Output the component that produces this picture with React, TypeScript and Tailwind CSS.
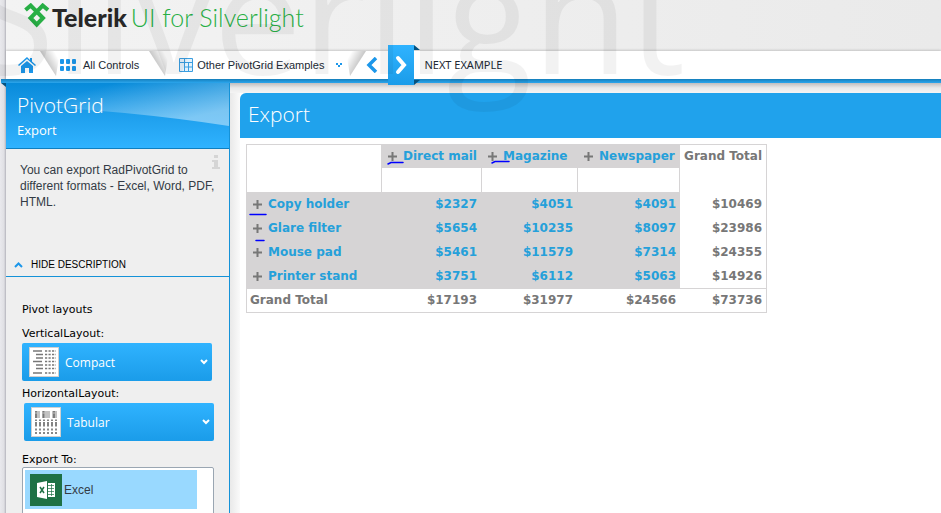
import type { ReactNode } from 'react';

const columns = ['Direct mail', 'Magazine', 'Newspaper'];

const rows = [
  { name: 'Copy holder', values: ['$2327', '$4051', '$4091'], total: '$10469' },
  { name: 'Glare filter', values: ['$5654', '$10235', '$8097'], total: '$23986' },
  { name: 'Mouse pad', values: ['$5461', '$11579', '$7314'], total: '$24355' },
  { name: 'Printer stand', values: ['$3751', '$6112', '$5063'], total: '$14926' },
];

const totals = ['$17193', '$31977', '$24566', '$73736'];

function TelerikLogo() {
  return (
    <svg viewBox="0 0 26 25" className="mt-px h-[25px] w-[26px]" fill="none" stroke="#28af45" strokeWidth="4">
      <path d="M1.5 7 6.700 2.500 19 15l-6.300 6.500L6.500 15 18.700 2.500 24 7" />
    </svg>
  );
}

function TabEdge({ flip = false }: { flip?: boolean }) {
  return (
    <svg viewBox="0 0 20 28" className={flip ? 'h-7 w-5 shrink-0 -scale-x-100' : 'h-7 w-5 shrink-0'}>
      <defs>
        <linearGradient id="edge" gradientUnits="userSpaceOnUse" x1="5" y1="9" x2="16" y2="3">
          <stop offset="0" stopColor="#000" stopOpacity="0.22" />
          <stop offset="1" stopColor="#000" stopOpacity="0" />
        </linearGradient>
      </defs>
      <path d="M0 0h20l-4 25z" fill="url(#edge)" />
    </svg>
  );
}

function Plus() {
  return (
    <button type="button" aria-label="Expand" className="mr-1.5 inline-block align-[-1px]">
      <svg viewBox="0 0 9 9" className="block size-[9px]" stroke="#777" strokeWidth="2">
        <path d="M0 4.5h9M4.5 0v9" />
      </svg>
    </button>
  );
}

function CompactIcon() {
  return (
    <svg viewBox="0 0 26 26" className="size-[26px]" stroke="#777" strokeWidth="1.5">
      {[2, 5.5, 9, 12.5, 16, 19.5, 24].map((y, i) => (
        <g key={y}>
          <path d={i % 3 === 0 ? `M2 ${y}h9` : `M5 ${y}h7`} />
          <path strokeDasharray="2.200 1.300" d={`M14 ${y}h11`} />
        </g>
      ))}
    </svg>
  );
}

function TabularIcon() {
  return (
    <svg viewBox="0 0 26 26" className="size-[26px]">
      <path fill="#c2c2c2" d="M2 2h5v7H2zM9 2h8v7H9zM19 2h5v7h-5z" />
      <path
        stroke="#777"
        strokeWidth="1.800"
        strokeDasharray="1.500 1 5 10"
        d="M3 2v7M10.500 2v7M21 2v7M3 10.500v7M7 10.500v7M11 10.500v7M15 10.500v7M19 10.500v7M23 10.500v7"
      />
      <path stroke="#888" strokeWidth="1.800" strokeDasharray="2 2" d="M2 20.500h22M2 24h22" />
    </svg>
  );
}

function ExcelIcon() {
  return (
    <svg viewBox="0 0 32 32" className="size-8">
      <path fill="#1e7145" d="M0 0h32v32H0z" />
      <path fill="#fff" d="M7 9l10-2v18L7 23z" />
      <path stroke="#1e7145" strokeWidth="1.5" d="m10 13 4 6m0-6-4 6" />
      <path fill="#fff" d="M18 9h7v14h-7z" />
      <path stroke="#1e7145" strokeWidth="0.7" d="M18 11.5h6M18 14.5h6M18 17.5h6M18 20.5h6M21.5 10v12" />
    </svg>
  );
}

interface LayoutSelectProps {
  id: string;
  label: string;
  value: string;
  icon: ReactNode;
  className?: string;
}

function LayoutSelect({ id, label, value, icon, className = '' }: LayoutSelectProps) {
  return (
    <div>
      <label htmlFor={id} className="block pt-0.5 leading-[18px]">
        {label}
      </label>
      <div className={`relative ${className}`}>
        <select
          id={id}
          defaultValue={value}
          className="block h-[38px] w-[190px] appearance-none rounded-xs bg-linear-to-b from-[#2fb3ff] to-[#1a9ce9] pt-0.5 pl-[43px] font-['Open_Sans',sans-serif] text-xs text-white"
        >
          <option>Compact</option>
          <option>Tabular</option>
        </select>
        <span className="pointer-events-none absolute top-1 left-[7px] grid size-[30px] place-items-center border border-[#d0d0d0] bg-white">
          {icon}
        </span>
        <svg viewBox="0 0 8 6" className="pointer-events-none absolute top-4 left-[178px] h-1.5 w-2" fill="none" stroke="#fff" strokeWidth="2">
          <path d="m1 1 3 3 3-3" />
        </svg>
      </div>
    </div>
  );
}

function NavBar() {
  return (
    <nav className="relative z-10 flex h-7 shrink-0 items-center bg-white font-['Liberation_Sans',sans-serif] text-[11px] text-[#222a35] shadow-[0_-1px_2px_#0000002a]">
      <a href="#home" aria-label="Home" className="ml-3">
        <svg viewBox="0 0 18 16" className="h-4 w-[18px]" fill="#1c97ea">
          <path d="M9 0 0 8l1 1 8-7 8 7 1-1-4-3.500V1h-2v2z" />
          <path d="m9 4-6 5v7h4v-5h4v5h4V9z" />
        </svg>
      </a>
      <span className="ml-1 flex"><TabEdge /></span>
      <a href="#controls" className="flex items-center gap-[7px]">
        <svg viewBox="0 0 16 12" className="h-3 w-4" fill="#1c97ea">
          {[0, 6, 12].map((x) => (
            <g key={x}>
              <rect x={x} width="4" height="5" rx="1" />
              <rect x={x} y="7" width="4" height="5" rx="1" />
            </g>
          ))}
        </svg>
        All Controls
      </a>
      <span className="ml-2.5 flex"><TabEdge /></span>
      <a href="#examples" className="ml-2.5 flex items-center gap-1">
        <svg viewBox="0 0 14 14" className="size-3.5" fill="none" stroke="#3a9ee0">
          <path fill="#e4f2fc" d="M.5.5h13v13H.5z" />
          <path d="M.5 4.500h13M5.500.5v13M5.500 9h8M9.500 4.500v9" />
        </svg>
        Other PivotGrid Examples
        <svg viewBox="0 0 6 4" className="ml-2 h-1 w-1.5" fill="#1c97ea">
          <path d="M0 0h2v2H0zM4 0h2v2H4zM2 2h2v2H2z" />
        </svg>
      </a>
      <span className="ml-1 flex"><TabEdge flip /></span>
      <button type="button" aria-label="Previous example">
        <svg viewBox="0 0 12 16" className="h-4 w-3" fill="none" stroke="#1c97ea" strokeWidth="3.500">
          <path d="m10 1-7 7 7 7" />
        </svg>
      </button>
      <div className="relative ml-2.5 h-7 w-[26px]">
        <svg viewBox="0 0 32 40" className="absolute -top-1.5 left-[26px] h-10 w-1.5" preserveAspectRatio="none" fill="#06527f">
          <path d="M0 0l32 5H0zM0 40l32-5H0z" />
        </svg>
        <button
          type="button"
          aria-label="Next example"
          className="absolute -top-1.5 left-0 grid h-10 w-[26px] place-items-center bg-linear-to-b from-[#2fb3ff] to-[#1a9ce9]"
        >
          <svg viewBox="0 0 14 20" className="h-5 w-3.5" fill="none" stroke="#fff" strokeWidth="4" strokeLinecap="round">
            <path d="m4 3 6 7-6 7" />
          </svg>
        </button>
      </div>
      <a href="#next" className="ml-2.5 font-['Noto_Sans',sans-serif] text-[11px]">
        NEXT EXAMPLE
      </a>
    </nav>
  );
}

function Sidebar() {
  return (
    <aside className="relative w-56 shrink-0 border-r border-[#1492d8] bg-[#efefef] font-['DejaVu_Sans',sans-serif] text-[11px] text-black">
      <svg viewBox="0 0 5 4" className="absolute top-0 -left-[5px] h-1 w-[5px]" fill="#06527f">
        <path d="M0 0h5v4z" />
      </svg>
      <header className="relative h-[66px] border-b border-[#0f7fc0] bg-linear-to-b from-[#078bda] to-[#2fb3ff] pl-[11px] font-['Open_Sans',sans-serif] text-white">
        <svg viewBox="0 0 223 65" preserveAspectRatio="none" className="absolute inset-0 h-[65px] w-full">
          <defs>
            <linearGradient id="gloss" gradientUnits="userSpaceOnUse" x1="110" y1="0" x2="122" y2="50">
              <stop offset="0" stopColor="#fff" stopOpacity="0" />
              <stop offset="1" stopColor="#fff" stopOpacity="0.42" />
            </linearGradient>
          </defs>
          <path d="M0 0h223v43Q120 27 0 22z" fill="url(#gloss)" />
        </svg>
        <h1 className="relative pt-2 text-[21px] leading-7 font-light">PivotGrid</h1>
        <p className="relative text-[13px] leading-[22px]">Export</p>
      </header>
      <section className="relative h-32 border-b border-[#1492d8] pt-[13px] pl-3.5 font-['Liberation_Sans',sans-serif] text-[#333b45]">
        <svg viewBox="0 0 8 14" className="absolute top-1.5 right-[9px] h-3.5 w-2" fill="#d5d5d5">
          <path d="M2 0h4v3H2zM0 5h6v7h2v2H0v-2h2V7H0z" />
        </svg>
        <p className="text-xs leading-4">
          You can export RadPivotGrid to
          <br />
          different formats - Excel, Word, PDF,
          <br />
          HTML.
        </p>
        <button type="button" className="absolute bottom-[3px] left-2 flex items-center gap-2 text-[10px] leading-4 text-black">
          <svg viewBox="0 0 9 6" className="h-1.5 w-[9px]" fill="none" stroke="#1c97ea" strokeWidth="2">
            <path d="m1 5 3.500-3.500L8 5" />
          </svg>
          HIDE DESCRIPTION
        </button>
      </section>
      <section className="pt-[22px] pl-4">
        <h2 className="pt-0.5 leading-[18px]">Pivot layouts</h2>
        <div className="mt-1 space-y-0.5">
          <LayoutSelect id="vertical" label="VerticalLayout:" value="Compact" icon={<CompactIcon />} />
          <LayoutSelect id="horizontal" label="HorizontalLayout:" value="Tabular" icon={<TabularIcon />} className="left-0.5" />
        </div>
        <h2 className="mt-3 leading-[14px]">Export To:</h2>
        <div className="h-24 w-48 rounded-xs border border-[#9aa6b2] bg-white p-0.5">
          <button
            type="button"
            className="flex h-[39px] w-[172px] items-center gap-0.5 bg-[#99d9ff] pl-[5px] font-['Liberation_Sans',sans-serif] text-xs text-[#333b45]"
          >
            <ExcelIcon />
            Excel
          </button>
        </div>
      </section>
    </aside>
  );
}

// Pen strokes that sit on top of some expanders
function Mark({ className, d }: { className: string; d: string }) {
  return (
    <svg viewBox="0 0 20 4" className={`pointer-events-none absolute h-1 w-5 ${className}`} fill="none" stroke="#00f" strokeWidth="1.5" strokeLinecap="round">
      <path d={d} />
    </svg>
  );
}

function PivotTable() {
  return (
    <table className="w-[521px] table-fixed border-separate border-spacing-0 border border-[#d6d4d5] bg-white text-xs leading-4 font-bold text-[#777]">
      <colgroup>
        <col className="w-[134px]" />
        <col className="w-[100px]" />
        <col className="w-24" />
        <col className="w-[103px]" />
        <col />
      </colgroup>
      <thead>
        <tr className="h-[23px]">
          <td rowSpan={2} />
          {columns.map((name, i) => (
            <th key={name} scope="col" className="relative bg-[#d6d4d5] p-0 pb-0.5 pl-[7px] text-left whitespace-nowrap">
              <Plus />
              <a href="#column" className="text-[#25a0da]">{name}</a>
              {i === 0 && <Mark className="top-4 left-1.5" d="M1 3 4 1.500h12" />}
              {i === 1 && <Mark className="top-[15px] left-2.5" d="M1 3 4 1.500h14" />}
            </th>
          ))}
          <th scope="col" rowSpan={2} className="p-0 pt-[3px] pr-1 text-right align-top whitespace-nowrap">Grand Total</th>
        </tr>
        <tr className="h-6">
          <td className="border-l border-[#d6d4d5]" />
          <td className="border-l border-[#d6d4d5]" />
          <td className="border-x border-[#d6d4d5]" />
        </tr>
      </thead>
      <tbody>
        {rows.map((row, i) => (
          <tr key={row.name} className="h-6">
            <th scope="row" className="relative bg-[#d6d4d5] p-0 pl-1.5 text-left">
              <Plus />
              <a href="#row" className="text-[#25a0da]">{row.name}</a>
              {i === 0 && <Mark className="top-5 left-0.5" d="M1 2.500h16" />}
              {i === 1 && <Mark className="top-[22px] left-2 z-10" d="M1 2.500h8" />}
            </th>
            {row.values.map((value) => (
              <td key={value} className="bg-[#d6d4d5] p-0 pr-1 text-right text-[#25a0da]">{value}</td>
            ))}
            <td className="p-0 pr-1 text-right">{row.total}</td>
          </tr>
        ))}
      </tbody>
      <tfoot>
        <tr className="h-6">
          <th scope="row" className="border-t border-[#d6d4d5] p-0 pb-0.5 pl-[3px] text-left">Grand Total</th>
          {totals.map((value) => (
            <td key={value} className="border-t border-[#d6d4d5] p-0 pr-1 pb-0.5 text-right">{value}</td>
          ))}
        </tr>
      </tfoot>
    </table>
  );
}

export default function App() {
  return (
    <div className="relative flex h-screen flex-col overflow-hidden bg-[linear-gradient(to_right,#e9e9ed,#e0e0e4_4px,#b4b4bc_6px)] pl-1.5 font-['DejaVu_Sans',sans-serif]">
      <header className="flex h-[51px] shrink-0 items-start bg-linear-to-r from-[#f3f3f3] to-[#eaeaea] pt-0.5 pl-[18px] font-['Lato',sans-serif] text-[25px] leading-[30px]">
        <TelerikLogo />
        <strong className="ml-0.5 font-black text-[#282828]">Telerik</strong>
        <span className="ml-1 font-light text-[#28af45]">UI for Silverlight</span>
      </header>
      <NavBar />
      <div className="-ml-[5px] h-1 shrink-0 bg-linear-to-b from-[#1580bd] to-[#2ba6ee]" />
      <div className="flex min-h-0 flex-1">
        <Sidebar />
        <div className="min-w-0 flex-1 bg-[linear-gradient(to_right,#e9e9e9,#fafafa_10px)]">
          <div className="h-2.5 bg-linear-to-b from-[#c0bebf] via-[#eaeaea] to-[#f4f4f4]" />
          <main className="ml-2.5 h-full bg-white">
            <h2 className="h-[45px] rounded-tl-md bg-[#20a2ec] pl-2 font-['Open_Sans',sans-serif] text-[21px] leading-[42px] font-light text-white">
              Export
            </h2>
            <div className="pt-1.5 pl-1.5">
              <PivotTable />
            </div>
          </main>
        </div>
      </div>
      <div
        aria-hidden="true"
        className="pointer-events-none absolute -top-[94px] -left-8 z-20 font-['Open_Sans',sans-serif] text-[158px] leading-[214px] font-medium whitespace-nowrap text-black/5"
      >
        Silverlight
      </div>
    </div>
  );
}
